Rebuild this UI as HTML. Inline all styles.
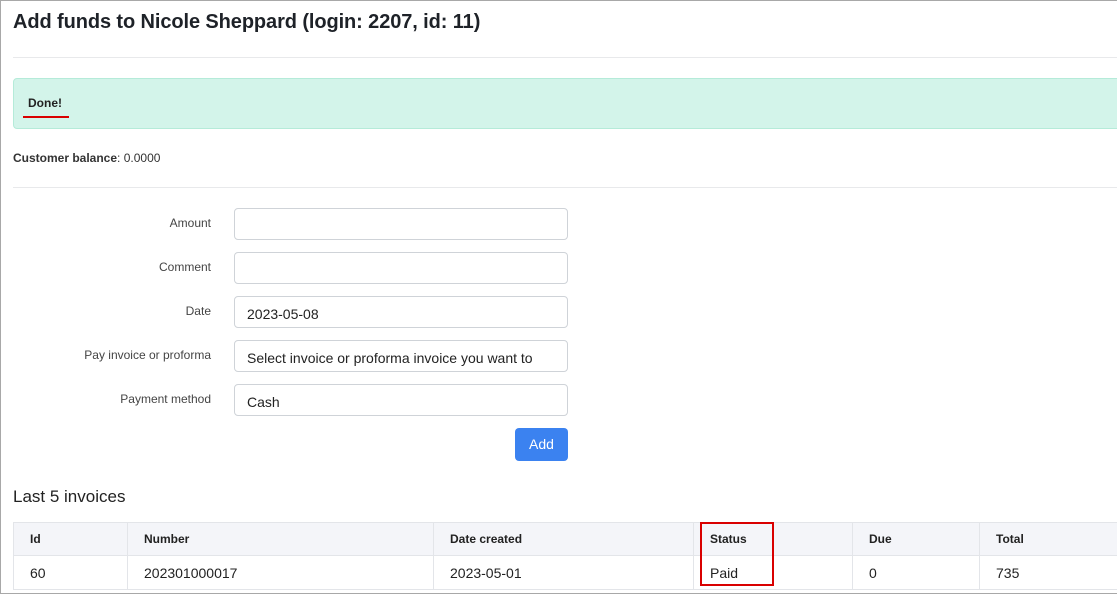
<!DOCTYPE html>
<html><head><meta charset="utf-8"><style>
*{box-sizing:border-box;margin:0;padding:0}
body{width:1117px;height:594px;overflow:hidden;background:#fff;font-family:"Liberation Sans",sans-serif;color:#222;position:relative}
.frame{position:absolute;left:0;top:0;width:1117px;height:594px;border:1px solid #a8a8a8;border-right:none}
.abs{position:absolute}
h1{position:absolute;left:13px;top:11px;font-size:20px;font-weight:bold;color:#1e2228;letter-spacing:-0.1px}
.hr{position:absolute;left:13px;right:0;height:1px;background:#e8e9eb}
.alert{position:absolute;left:13px;top:78px;width:1110px;height:51px;background:#d3f4ea;border:1px solid #b5ebd9;border-radius:4px}
.lbl{position:absolute;right:906px;font-size:12px;color:#444;text-align:right;white-space:nowrap}
.inp{position:absolute;left:234px;width:334px;height:32px;border:1px solid #cfd3d8;border-radius:4px;font-size:14px;padding:9px 0 0 12px;color:#222}
.btn{position:absolute;left:515px;top:428px;width:53px;height:33px;background:#3b82f0;border-radius:4px;color:#fff;font-size:14px;text-align:center;line-height:33px}
table{position:absolute;left:13px;top:522px;width:1110px;border-collapse:collapse;font-size:13px}
td,th{border:1px solid #e3e5e9;text-align:left;padding-left:16px}
th{background:#f4f5f9;height:33px;font-weight:bold;font-size:12px;color:#222}
td{height:34px;font-size:14px}
</style></head><body>
<div class="frame"></div>
<h1>Add funds to Nicole Sheppard (login: 2207, id: 11)</h1>
<div class="hr" style="top:57px"></div>
<div class="alert"></div>
<div class="abs" style="left:28px;top:96px;font-size:12px;font-weight:bold;color:#222">Done!</div>
<div class="abs" style="left:23px;top:116px;width:46px;height:2px;background:#d90000"></div>
<div class="abs" style="left:13px;top:151px;font-size:12px;color:#333"><b>Customer balance</b>: 0.0000</div>
<div class="hr" style="top:187px"></div>
<div class="lbl" style="top:216px">Amount</div>
<div class="inp" style="top:208px"></div>
<div class="lbl" style="top:260px">Comment</div>
<div class="inp" style="top:252px"></div>
<div class="lbl" style="top:304px">Date</div>
<div class="inp" style="top:296px">2023-05-08</div>
<div class="lbl" style="top:348px">Pay invoice or proforma</div>
<div class="inp" style="top:340px">Select invoice or proforma invoice you want to</div>
<div class="lbl" style="top:392px">Payment method</div>
<div class="inp" style="top:384px">Cash</div>
<div class="btn">Add</div>
<div class="abs" style="left:13px;top:487px;font-size:17px;color:#222">Last 5 invoices</div>
<table>
<tr><th style="width:114px">Id</th><th style="width:306px">Number</th><th style="width:260px">Date created</th><th style="width:159px">Status</th><th style="width:127px">Due</th><th>Total</th></tr>
<tr><td>60</td><td>202301000017</td><td>2023-05-01</td><td>Paid</td><td>0</td><td>735</td></tr>
</table>
<div class="abs" style="left:700px;top:522px;width:74px;height:64px;border:2px solid #d90000"></div>
</body></html>
